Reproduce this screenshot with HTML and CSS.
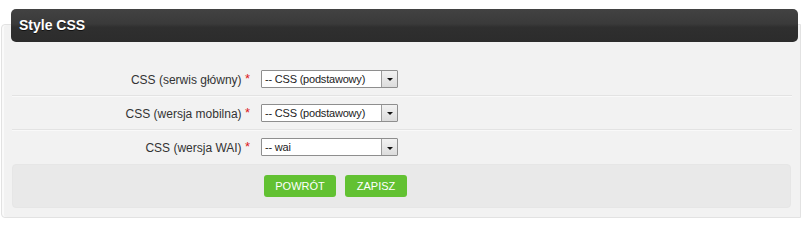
FILE: index.html
```html
<!DOCTYPE html>
<html lang="pl">
<head>
<meta charset="utf-8">
<title>Style CSS</title>
<link rel="stylesheet" href="styles.css">
</head>
<body>
<div class="box">
  <div class="box-head">Style CSS</div>
  <div class="box-body">
    <div class="row">
      <label class="lbl">CSS (serwis główny) <span class="req">*</span></label>
      <div class="sel"><span class="sel-text">-- CSS (podstawowy)</span><span class="sel-btn"><span class="tri"></span></span></div>
    </div>
    <div class="row">
      <label class="lbl">CSS (wersja mobilna) <span class="req">*</span></label>
      <div class="sel"><span class="sel-text">-- CSS (podstawowy)</span><span class="sel-btn"><span class="tri"></span></span></div>
    </div>
    <div class="row last">
      <label class="lbl">CSS (wersja WAI) <span class="req">*</span></label>
      <div class="sel"><span class="sel-text">-- wai</span><span class="sel-btn"><span class="tri"></span></span></div>
    </div>
    <div class="actions">
      <button class="btn btn-back">POWRÓT</button>
      <button class="btn btn-save">ZAPISZ</button>
    </div>
  </div>
</div>
</body>
</html>
```
FILE: styles.css
```css
html, body {
  margin: 0;
  padding: 0;
  background: #ffffff;
  font-family: "Liberation Sans", Arial, sans-serif;
}

.box {
  width: 800px;
  margin: 0 0 0 1px;
  padding-top: 9px;
}

.box-head {
  position: relative;
  z-index: 1;
  margin: 0 3px 0 10px;
  height: 33px;
  box-sizing: border-box;
  padding: 8px 0 0 8px;
  border-radius: 5px;
  background: linear-gradient(#424242 0%, #3a3a3a 45%, #2f2f2f 55%, #2c2c2c 100%);
  color: #ffffff;
  font-weight: bold;
  font-size: 14px;
  line-height: 16px;
  text-shadow: 0 1px 0 #111;
}

.box-body {
  margin-top: -18px;
  height: 194px;
  box-sizing: border-box;
  padding: 37px 8px 10px 10px;
  background: #f2f2f2;
  border: 1px solid #e2e2e2;
  border-radius: 4px 0 0 4px;
  box-shadow: inset 2px 0 0 #fafafa;
}

.row {
  display: flex;
  align-items: center;
  height: 34px;
  box-sizing: border-box;
  border-bottom: 1px solid #e3e3e3;
  box-shadow: 0 1px 0 #f9f9f9;
}

.row.last {
  border-bottom: none;
  box-shadow: none;
}

.lbl {
  width: 238px;
  text-align: right;
  font-size: 12px;
  color: #333333;
  margin-right: 11px;
}

.req {
  color: #dd1b1b;
  font-size: 13px;
  vertical-align: 1px;
}

.sel {
  display: flex;
  align-items: stretch;
  width: 137px;
  height: 18px;
  box-sizing: border-box;
  background: #ffffff;
  border: 1px solid #8e8e8e;
  border-radius: 1px;
}

.sel-text {
  flex: 1;
  font-size: 11px;
  line-height: 16px;
  color: #222222;
  padding-left: 3px;
  letter-spacing: -0.2px;
}

.sel-btn {
  width: 16px;
  box-sizing: border-box;
  border-left: 1px solid #9c9c9c;
  background: linear-gradient(#f2f2f2, #dcdcdc);
  display: flex;
  align-items: center;
  justify-content: center;
}

.tri {
  width: 0;
  height: 0;
  margin-top: 2px;
  border-left: 3px solid transparent;
  border-right: 3px solid transparent;
  border-top: 3px solid #111111;
}

.actions {
  display: flex;
  align-items: center;
  gap: 9px;
  height: 44px;
  box-sizing: border-box;
  margin-right: 1px;
  padding-left: 251px;
  background: #e9e9e9;
  border-radius: 4px;
  border: 1px solid #e6e6e6;
}

.btn {
  height: 22px;
  border: none;
  border-radius: 3px;
  background: #62c132;
  color: #ffffff;
  font-family: "Liberation Sans", Arial, sans-serif;
  font-size: 11px;
  padding: 0;
  cursor: pointer;
}

.btn-back {
  width: 72px;
}

.btn-save {
  width: 62px;
}
```
